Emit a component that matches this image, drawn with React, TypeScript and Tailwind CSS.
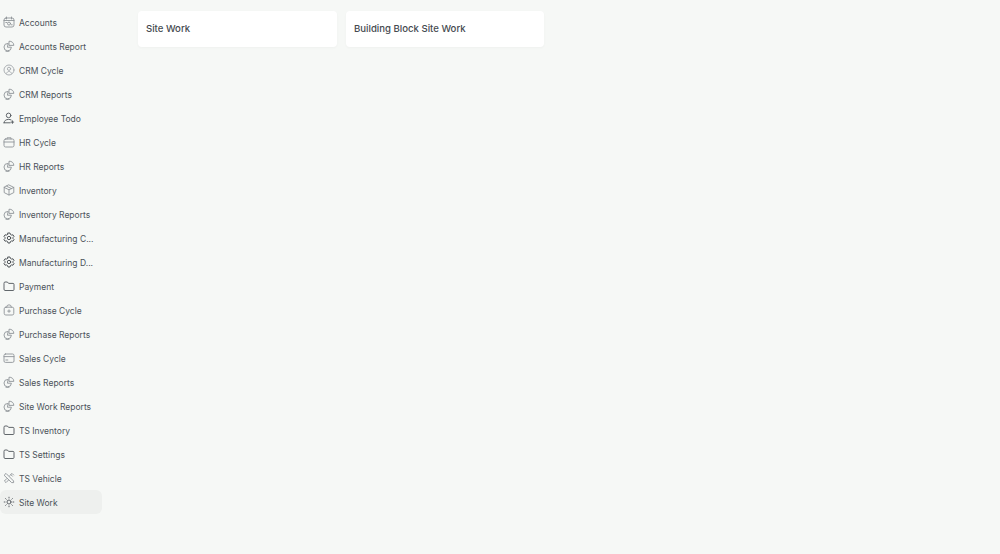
import type { ReactNode } from "react";

const P = ({ children, cls }: { children: ReactNode; cls: string }) => (
  <svg
    width="12"
    height="12"
    viewBox="0 0 12 12"
    fill="none"
    stroke="currentColor"
    strokeWidth="0.9"
    strokeLinecap="round"
    strokeLinejoin="round"
    className={`shrink-0 ${cls}`}
  >
    {children}
  </svg>
);

const GREY = "text-[#8f9498]";
const DARK = "text-[#50565b]";

const pie = (
  <P cls={GREY}>
    <path d="M4.8 3.4A3.7 3.7 0 1 0 8.4 7.2H4.8Z" />
    <path d="M6.4 1.2A4 4 0 0 1 10.8 5.4H6.4Z" />
    <path d="M3 11.3h3" />
  </P>
);
const accounts = (
  <P cls={GREY}>
    <rect x="1" y="2" width="10" height="9" rx="2" />
    <path d="M1 4.5h10M3.5 1v2M8.5 1v2" />
    <circle cx="6" cy="7.6" r="1.5" />
    <path d="M2.8 6.5h1M8.2 8.8h1" />
  </P>
);
const crm = (
  <P cls="text-[#a3a7ab]">
    <circle cx="6" cy="6" r="5" />
    <circle cx="6" cy="4.8" r="1.6" />
    <path d="M3.6 9.2c.5-1.2 1.4-1.7 2.4-1.7s1.9.5 2.4 1.7" />
  </P>
);
const employee = (
  <P cls={DARK}>
    <circle cx="5.6" cy="3.4" r="2.3" />
    <path d="M1 10.8c.2-2.2 2-3.4 4.6-3.4 1 0 1.8.2 2.5.5" />
    <path d="M1 10.8h6.2M9.4 8.8v2.6M8.1 10.1h2.6" />
  </P>
);
const hr = (
  <P cls={GREY}>
    <path d="M4 3V1.8h4V3" />
    <rect x="1" y="3" width="10" height="8" rx="1.6" />
    <path d="M1 6h10" />
  </P>
);
const box = (
  <P cls={GREY}>
    <path d="M6 1l4.8 2.4v5.2L6 11 1.2 8.6V3.4Z" />
    <path d="M1.2 3.4 6 5.8l4.8-2.4M6 5.8V11M3.6 2.2 8.4 4.6" />
  </P>
);
const gear = (
  <P cls="text-[#3f454a]">
    <path d="M5 1h2l.4 1.4 1.3.7L10 2.8l1 1.7-1 1v1l1 1-1 1.7-1.3-.3-1.3.7L7 11H5l-.4-1.4-1.3-.7-1.3.3-1-1.7 1-1v-1l-1-1 1-1.7 1.3.3 1.3-.7Z" />
    <circle cx="6" cy="6" r="1.7" />
  </P>
);
const folder = (
  <P cls={DARK}>
    <path d="M1 3a1 1 0 0 1 1-1h2.4l1.2 1.4H10a1 1 0 0 1 1 1V9.5a1 1 0 0 1-1 1H2a1 1 0 0 1-1-1Z" />
  </P>
);
const purchase = (
  <P cls={GREY}>
    <path d="M3.6 3.2A2.4 2.4 0 0 1 8.4 3.2" />
    <rect x="1.2" y="3.2" width="9.6" height="7.8" rx="1.6" />
    <path d="M6 5.8v2.6M4.7 7.1h2.6" />
  </P>
);
const sales = (
  <P cls={GREY}>
    <rect x="1" y="2" width="10" height="8.4" rx="1.4" />
    <path d="M1 4.6h10M2.8 8h2" />
  </P>
);
const vehicle = (
  <P cls={GREY}>
    <path d="M1.4 3 3 1.4l7.6 7.6v1.6H9Z" />
    <path d="M10.6 3 9 1.4 6.6 3.8M5.4 8.2 3 10.6 1.4 9l2.4-2.4" />
    <path d="M7.8 2.6 9.4 4.2" />
  </P>
);
const sun = (
  <P cls={DARK}>
    <circle cx="6" cy="6" r="2" />
    <path d="M6 1.2v.8M6 10v.8M1.2 6H2M10 6h.8M2.6 2.6l.6.6M8.8 8.8l.6.6M2.6 9.4l.6-.6M8.8 3.2l.6-.6" />
  </P>
);

const items: { label: string; icon: ReactNode; active?: boolean }[] = [
  { label: "Accounts", icon: accounts },
  { label: "Accounts Report", icon: pie },
  { label: "CRM Cycle", icon: crm },
  { label: "CRM Reports", icon: pie },
  { label: "Employee Todo", icon: employee },
  { label: "HR Cycle", icon: hr },
  { label: "HR Reports", icon: pie },
  { label: "Inventory", icon: box },
  { label: "Inventory Reports", icon: pie },
  { label: "Manufacturing C...", icon: gear },
  { label: "Manufacturing D...", icon: gear },
  { label: "Payment", icon: folder },
  { label: "Purchase Cycle", icon: purchase },
  { label: "Purchase Reports", icon: pie },
  { label: "Sales Cycle", icon: sales },
  { label: "Sales Reports", icon: pie },
  { label: "Site Work Reports", icon: pie },
  { label: "TS Inventory", icon: folder },
  { label: "TS Settings", icon: folder },
  { label: "TS Vehicle", icon: vehicle },
  { label: "Site Work", icon: sun, active: true },
];

export default function App() {
  return (
    <div className="flex h-[554px] w-[1000px] overflow-hidden bg-[#f6f8f6] font-['Inter',sans-serif]">
      <aside className="flex w-[102px] shrink-0 flex-col pt-[10px]">
        {items.map(({ label, icon, active }) => (
          <div
            key={label}
            className={`flex h-[24px] items-center gap-[4px] rounded-[6px] pl-[3px] ${active ? "bg-[#eef0ee]" : ""}`}
          >
            {icon}
            <span className="translate-y-[0.5px] whitespace-nowrap text-[8.5px] leading-[12px] text-[#4b5259]">{label}</span>
          </div>
        ))}
      </aside>
      <main className="flex items-start gap-[9px] pl-[36px] pt-[11px]">
        <div className="flex h-[36px] w-[199px] items-center rounded-[4px] bg-white px-[8px] shadow-[0_1px_3px_rgba(0,0,0,0.03)]">
          <span className="text-[9.6px] font-medium text-[#454a4f]">Site Work</span>
        </div>
        <div className="flex h-[36px] w-[198px] items-center rounded-[4px] bg-white px-[8px] shadow-[0_1px_3px_rgba(0,0,0,0.03)]">
          <span className="text-[9.6px] font-medium text-[#454a4f]">Building Block Site Work</span>
        </div>
      </main>
    </div>
  );
}
